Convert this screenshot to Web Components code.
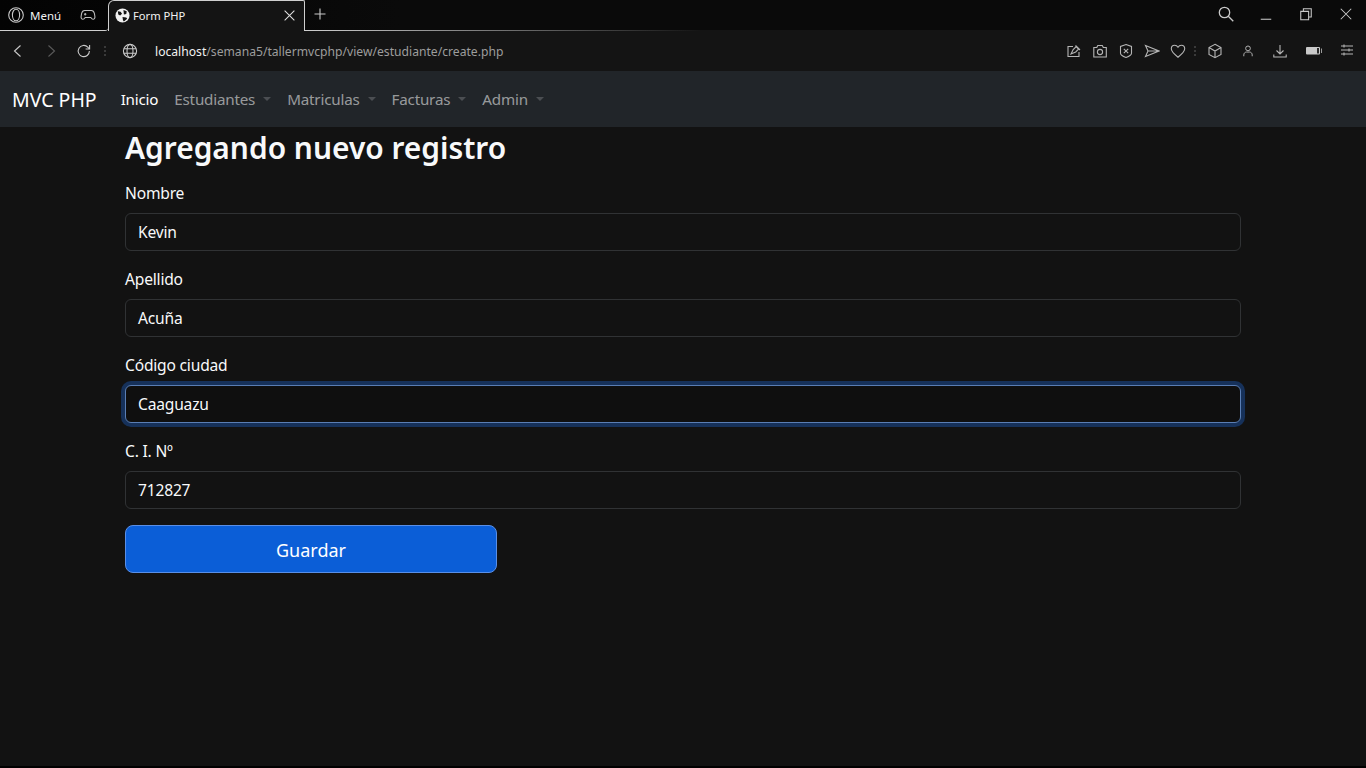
<!DOCTYPE html>
<html lang="es">
<head>
<meta charset="utf-8">
<title>Form PHP</title>
<style>
	html, body { margin: 0; height: 100%; background: #121212; }
	body {
		color: #f8f9fa;
		display: flex;
		flex-direction: column;
		font-family: "Noto Sans", "Open Sans", sans-serif;
		height: 768px;
		overflow: hidden;
	}
</style>
</head>
<body>
	<tab-strip></tab-strip>
	<address-bar url-host="localhost" url-path="/semana5/tallermvcphp/view/estudiante/create.php"></address-bar>
	<nav-bar brand="MVC PHP"></nav-bar>
	<page-content>
		<h2 slot="title">Agregando nuevo registro</h2>
		<form-field label="Nombre" value="Kevin"></form-field>
		<form-field label="Apellido" value="Acuña"></form-field>
		<form-field label="Código ciudad" value="Caaguazu" focused></form-field>
		<form-field label="C. I. Nº" value="712827"></form-field>
		<save-button>Guardar</save-button>
	</page-content>

<script>
const ICONS = {
	opera: '<circle cx="8" cy="8" r="7.3"/><ellipse cx="8" cy="8" rx="3.6" ry="5.8"/>',
	game: '<path d="M4.6 3.5h6.8c1.8 0 2.6 1.2 3 3l.5 3c.2 1.6-.6 2.8-1.8 2.8-1 0-1.6-.7-2.3-1.8H5.2c-.7 1.1-1.3 1.8-2.3 1.8-1.2 0-2-1.2-1.8-2.8l.5-3c.4-1.8 1.2-3 3-3z"/><path d="M4 7.2h2.4M5.2 6v2.4M10 6.4v.1M11.6 8v.1"/>',
	close: '<path d="M2 2l12 12M14 2L2 14"/>',
	plus: '<path d="M8 2.5v11M2.5 8h11"/>',
	search: '<circle cx="6.5" cy="6.5" r="5.2"/><path d="M10.3 10.3l5 5"/>',
	minimize: '<path d="M2 14h12"/>',
	restore: '<path d="M2 5h9v9.5H2zM5 5V2h9v9.5h-3"/>',
	back: '<path d="M10.5 2.5L4.5 8l6 5.5"/>',
	forward: '<path d="M5.5 2.5l6 5.5-6 5.5"/>',
	reload: '<path d="M13.4 8a5.6 5.6 0 1 1-1.6-3.9L13.4 6"/><path d="M13.6 2v4h-4"/>',
	globe: '<circle cx="8" cy="8" r="6.6"/><ellipse cx="8" cy="8" rx="3" ry="6.6"/><path d="M1.8 5.7h12.4M1.8 10.3h12.4"/>',
	pin: '<path d="M13 9v4.5H2V3.5h5"/><path d="M5 11l2.2-4.5 3-3 2.5 2.5-3 3z"/><path d="M9.5 2.5l4.5 4.5"/>',
	camera: '<path d="M1.8 4.5h3l1-2h4.5l1 2h3V14H1.8z"/><circle cx="8" cy="9" r="2.6"/>',
	shield: '<path d="M8 1.5l5.5 2v6.7c0 1.5-3.5 3.5-5.5 4.3-2-.8-5.5-2.8-5.5-4.3V3.5z"/><path d="M5.8 5.8l4.4 4.4M10.2 5.8l-4.4 4.4"/>',
	send: '<path d="M1.5 2.5L15 8 1.5 13.5 4 8zM4 8h11"/>',
	heart: '<path d="M8 14.2C4 11 1.3 8.8 1.3 5.8 1.3 3.7 2.9 2.3 4.7 2.3c1.4 0 2.5.7 3.3 2 .8-1.3 1.9-2 3.3-2 1.8 0 3.4 1.4 3.4 3.5 0 3-2.7 5.2-6.7 8.4z"/>',
	cube: '<path d="M8 1.3l6 3.2v7L8 14.7l-6-3.2v-7zM2 4.5L8 8l6-3.5M8 8v6.7"/>',
	user: '<circle cx="8" cy="5" r="2.7"/><path d="M3.2 14v-1.5c0-2 1.5-3.3 3-3.3h3.6c1.5 0 3 1.3 3 3.3V14"/>',
	download: '<path d="M8 2v8.5M4.5 7.5L8 11l3.5-3.5M1.8 11.5V14h12.4v-2.5"/>',
	sliders: '<path d="M3 3h12M3 7h12M3 11h12M6 1.5v3M11 5.5v3M6 9.5v3"/>'
};

function icon(name, size = 16, stroke = '#c9c9c9', width = 1.1) {
	return `<svg width="${size}" height="${size}" viewBox="0 0 16 16" fill="none" stroke="${stroke}" stroke-width="${width}">${ICONS[name]}</svg>`;
}

class TabStrip extends HTMLElement {
	constructor() {
		super();
		this.attachShadow({ mode: 'open' });
	}

	connectedCallback() {
		this.shadowRoot.innerHTML = `
		<style>
			:host {
				align-items: flex-end;
				background: linear-gradient(to right, #030303, #0a0a0a 400px);
				color: #f2f2f2;
				display: flex;
				flex: none;
				font-family: "Noto Sans", sans-serif;
				font-size: 11.5px;
				height: 31px;
			}
			svg { display: block; flex: none; }
			.menu {
				align-items: center;
				border-bottom: 1px solid #cfcfcf;
				border-bottom-right-radius: 3px;
				box-sizing: border-box;
				display: flex;
				height: 31px;
				padding: 0 0 0 8px;
				width: 108px;
			}
			.menu span { margin: 0 19px 0 6px; }
			.tab {
				align-items: center;
				background: #141414;
				border: 1px solid #cfcfcf;
				border-bottom: 0;
				border-radius: 6px 2px 0 0;
				box-sizing: border-box;
				display: flex;
				height: 31px;
				padding: 0 8px 1px 6px;
				width: 197px;
			}
			.tab span { flex: 1; font-size: 11.2px; margin-left: 3px; }
			.rest {
				align-items: center;
				box-sizing: border-box;
				display: flex;
				flex: 1;
				height: 31px;
				padding-bottom: 3px;
				position: relative;
			}
			.rest::before {
				background: linear-gradient(to right, #cfcfcf, #141414 396px);
				bottom: 0;
				content: "";
				height: 1px;
				left: 0;
				position: absolute;
				right: 0;
			}
			.plus { margin-left: 7px; }
			.tools { align-items: center; display: flex; margin-left: auto; }
			.search { margin-right: 25px; margin-top: -1px; }
			.win { margin-right: 26px; }
			.win:last-child { margin-right: 13px; }
		</style>
		<div class="menu">
			${icon('opera')}
			<span>Menú</span>
			${icon('game', 16, '#bdbdbd')}
		</div>
		<div class="tab">
			<svg width="15" height="15" viewBox="0 0 16 16"><circle cx="8" cy="8" r="7.5" fill="#f2f2f2"/><path d="M3 3.5l3 .5 1.5 2-2 2L3.5 7zM9 2l3.5 1.5-.5 3-2.5.5zM8 9.5l4 .5 1 1.5-3.5 3-1-1.5z" fill="#141414"/></svg>
			<span>Form PHP</span>
			${icon('close', 13, '#e0e0e0', 1.3)}
		</div>
		<div class="rest">
			<div class="plus">${icon('plus', 16, '#c9c9c9')}</div>
			<div class="tools">
				<div class="search">${icon('search', 16, '#c9c9c9', 1.3)}</div>
				<div class="win">${icon('minimize', 14, '#c9c9c9', 1.2)}</div>
				<div class="win">${icon('restore', 14, '#c9c9c9', 1.2)}</div>
				<div class="win">${icon('close', 14, '#c9c9c9', 1.2)}</div>
			</div>
		</div>`;
	}
}

class AddressBar extends HTMLElement {
	constructor() {
		super();
		this.attachShadow({ mode: 'open' });
	}

	connectedCallback() {
		const color = '#b5b5b5';
		this.shadowRoot.innerHTML = `
		<style>
			:host {
				align-items: center;
				background: #141414;
				display: flex;
				flex: none;
				font-family: "Noto Sans", sans-serif;
				font-size: 12.15px;
				height: 40px;
			}
			svg { display: block; flex: none; }
			.dots { display: flex; flex-direction: column; gap: 2px; }
			.dots i { background: #3a3a3a; display: block; height: 2px; width: 2px; }
			.nav { align-items: center; display: flex; gap: 17px; margin-left: 10px; }
			.nav .dots { margin-left: -5px; }
			.nav .dots + svg { margin-left: -1px; }
			.url { color: #9d9d9d; margin-left: 17px; white-space: nowrap; }
			.url b { color: #f2f2f2; font-weight: 400; }
			.right { align-items: center; display: flex; gap: 10px; margin-left: auto; margin-right: 12px; }
			.right .dots { margin: 0 1px 0 -2px; }
			.cube { margin-right: 8px; }
			.m7 { margin-right: 7px; }
			.m8 { margin-right: 8px; }
			.m6 { margin-right: 6px; }
		</style>
		<div class="nav">
			${icon('back', 16, '#c9c9c9')}
			${icon('forward', 16, '#5a5a5a')}
			${icon('reload', 16, '#c9c9c9')}
			<div class="dots"><i></i><i></i><i></i></div>
			${icon('globe', 16, '#c9c9c9')}
		</div>
		<div class="url"><b>${this.getAttribute('url-host')}</b>${this.getAttribute('url-path')}</div>
		<div class="right">
			${icon('pin', 16, color)}
			${icon('camera', 16, color)}
			${icon('shield', 16, color)}
			${icon('send', 16, color)}
			${icon('heart', 16, color)}
			<div class="dots"><i></i><i></i><i></i></div>
			<div class="cube">${icon('cube', 16, color)}</div>
			<div class="m7">${icon('user', 14, color)}</div>
			<div class="m8">${icon('download', 16, color)}</div>
			<div class="m6"><svg width="16" height="16" viewBox="0 0 16 16"><rect x="0" y="4" width="14" height="7.5" rx="1" fill="#c9c9c9"/><rect x="11" y="5" width="2" height="5.5" fill="#2a2a2a"/><rect x="15" y="5.5" width="1.5" height="4.5" fill="#9a9a9a"/></svg></div>
			${icon('sliders', 16, color)}
		</div>`;
	}
}

class NavBar extends HTMLElement {
	constructor() {
		super();
		this.attachShadow({ mode: 'open' });
	}

	connectedCallback() {
		this.shadowRoot.innerHTML = `
		<style>
			:host {
				align-items: center;
				background: #212529;
				display: flex;
				flex: none;
				height: 56px;
				padding: 0 12px;
			}
			.brand { color: #fff; font-size: 19.5px; margin-right: 16px; }
			a { align-items: center; color: rgba(255,255,255,.55); display: flex; font-size: 15.2px; letter-spacing: -.2px; padding: 8px; }
			a.active { color: #fff; }
			a.drop::after {
				border-left: 4px solid transparent;
				border-right: 4px solid transparent;
				border-top: 4px solid currentColor;
				content: "";
				margin-left: 8px;
				opacity: .35;
			}
		</style>
		<div class="brand">${this.getAttribute('brand')}</div>
		<a class="active">Inicio</a>
		<a class="drop">Estudiantes</a>
		<a class="drop">Matriculas</a>
		<a class="drop">Facturas</a>
		<a class="drop">Admin</a>`;
	}
}

class PageContent extends HTMLElement {
	constructor() {
		super();
		this.attachShadow({ mode: 'open' });
	}

	connectedCallback() {
		this.shadowRoot.innerHTML = `
		<style>
			:host {
				border-bottom: 2px solid #000;
				box-sizing: border-box;
				display: block;
				flex: 1;
				padding: 0 125px;
			}
			::slotted(h2) {
				font-size: 29.9px;
				font-weight: 600;
				line-height: 38.4px;
				margin: 2px 0 13.6px;
			}
		</style>
		<slot name="title"></slot>
		<slot></slot>`;
	}
}

class FormField extends HTMLElement {
	constructor() {
		super();
		this.attachShadow({ mode: 'open' });
	}

	connectedCallback() {
		this.shadowRoot.innerHTML = `
		<style>
			:host { display: block; font-size: 15.6px; letter-spacing: -.2px; margin-bottom: 16px; }
			label { display: block; line-height: 24px; margin-bottom: 8px; }
			.control {
				border: 1px solid #303234;
				border-radius: 6px;
				box-sizing: border-box;
				height: 38px;
				line-height: 36px;
				padding: 0 12px;
			}
			:host([focused]) .control {
				background: #0f0f0f;
				border-color: #5a7eb4;
				box-shadow: 0 0 0 4px #16315a;
			}
		</style>
		<label>${this.getAttribute('label')}</label>
		<div class="control">${this.getAttribute('value')}</div>`;
	}
}

class SaveButton extends HTMLElement {
	constructor() {
		super();
		this.attachShadow({ mode: 'open' });
	}

	connectedCallback() {
		this.shadowRoot.innerHTML = `
		<style>
			:host {
				background: #0b5ed7;
				border: 1px solid #5a8fe6;
				border-radius: 8px;
				box-sizing: border-box;
				color: #fff;
				display: block;
				font-size: 18px;
				height: 48px;
				line-height: 48px;
				text-align: center;
				width: 372px;
			}
		</style>
		<slot></slot>`;
	}
}

customElements.define('tab-strip', TabStrip);
customElements.define('address-bar', AddressBar);
customElements.define('nav-bar', NavBar);
customElements.define('page-content', PageContent);
customElements.define('form-field', FormField);
customElements.define('save-button', SaveButton);
</script>
</body>
</html>
